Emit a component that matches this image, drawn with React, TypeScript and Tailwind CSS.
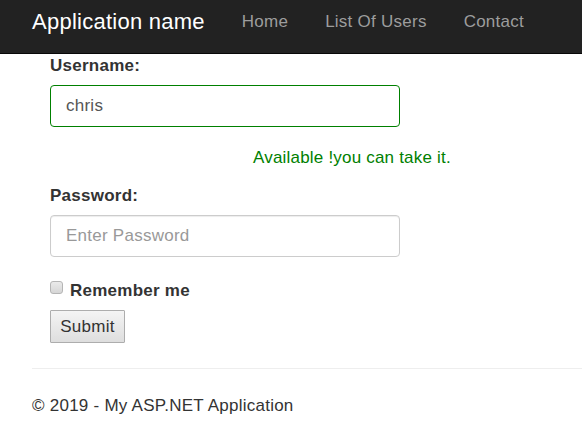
import React, { useState } from 'react';

const NAV_LINKS = ['Home', 'List Of Users', 'Contact'];

const NavBar: React.FC = () => (
  <nav className="h-[54px] bg-[#222] border-b border-[#080808] flex items-start">
    <a className="ml-[32px] mt-[11px] text-[22px] leading-none text-white tracking-[0.25px]">Application name</a>
    <ul className="ml-[37px] flex gap-[37px]">
      {NAV_LINKS.map((link) => (
        <li key={link} className="mt-[13px] text-[17px] leading-none text-[#9d9d9d]">
          {link}
        </li>
      ))}
    </ul>
  </nav>
);

const App: React.FC = () => {
  const [username, setUsername] = useState('chris');
  const [password, setPassword] = useState('');

  return (
    <div
      className="min-h-screen bg-white text-[#333] text-[17px] leading-[24px] tracking-[0.25px]"
      style={{ fontFamily: '"Liberation Sans", Arial, sans-serif' }}
    >
      <NavBar />

      <div className="pl-[32px]">
        <form className="pl-[18px]" onSubmit={(e) => e.preventDefault()}>
          <label className="block font-bold">Username:</label>
          <input
            value={username}
            onChange={(e) => setUsername(e.target.value)}
            className="mt-[7px] block w-[350px] h-[42px] px-[15px] border border-[#008000] rounded-[4px] text-[#555] outline-none"
          />
          <div className="mt-[19px] ml-[203px] text-[#008000] tracking-[0.2px]">Available !you can take it.</div>

          <label className="block mt-[14px] font-bold">Password:</label>
          <input
            type="password"
            value={password}
            onChange={(e) => setPassword(e.target.value)}
            placeholder="Enter Password"
            className="mt-[7px] block w-[350px] h-[42px] px-[15px] border border-[#ccc] rounded-[4px] text-[#555] placeholder:text-[#999] outline-none shadow-[inset_0_1px_1px_rgba(0,0,0,0.075)]"
          />

          <div className="mt-[22px] flex items-start">
            <span className="mt-[2px] w-[13px] h-[13px] rounded-[3px] border border-[#b5b5b5] bg-gradient-to-b from-[#eaeaea] to-[#d6d6d6]" />
            <span className="ml-[7px] font-bold">Remember me</span>
          </div>

          <button
            type="submit"
            className="mt-[7px] block w-[75px] h-[33px] border border-[#adadad] rounded-[1px] bg-gradient-to-b from-[#f4f4f4] to-[#dedede] text-[#333] text-[17px] leading-none"
          >
            Submit
          </button>
        </form>

        <hr className="mt-[25px] border-0 border-t border-[#eee]" />
        <footer className="mt-[25px]">
          <p>© 2019 - My ASP.NET Application</p>
        </footer>
      </div>
    </div>
  );
};

export default App;
